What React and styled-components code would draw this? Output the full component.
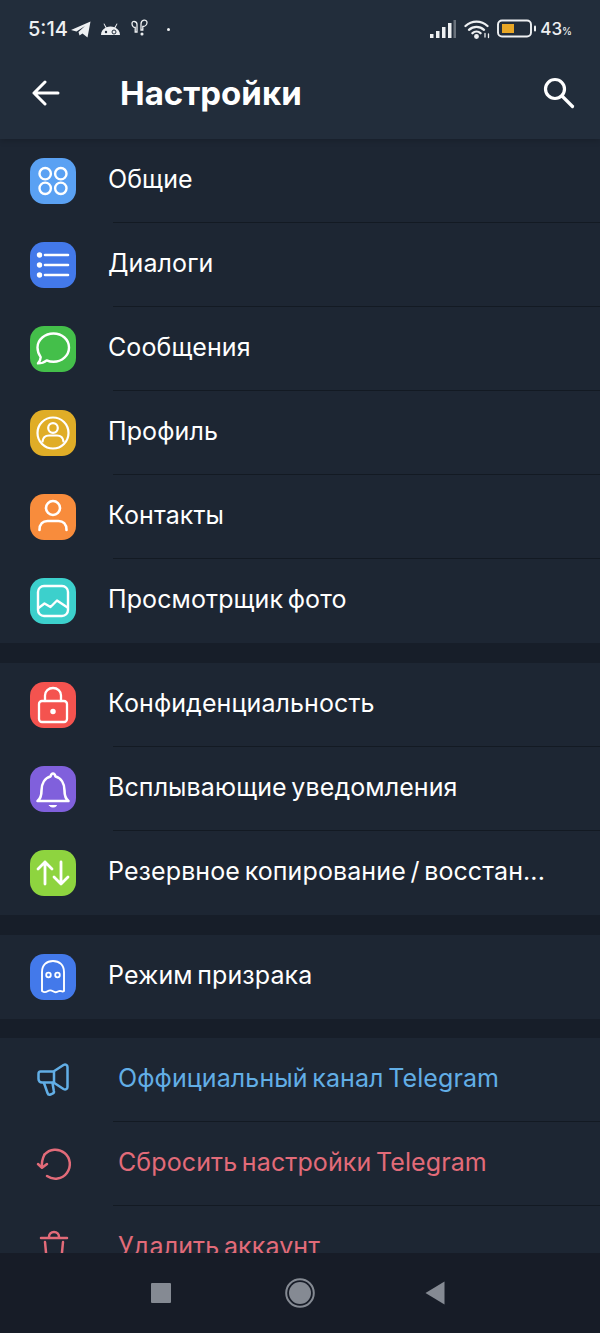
import React from "react";
import styled, { createGlobalStyle } from "styled-components";

const Global = createGlobalStyle`
  html, body { margin: 0; padding: 0; background: #171e29; }
  * { box-sizing: border-box; }
`;

const Screen = styled.div`
  width: 600px;
  height: 1333px;
  display: flex;
  flex-direction: column;
  overflow: hidden;
  background: #171e29;
  font-family: Inter, Roboto, "Liberation Sans", sans-serif;
  color: #fff;
`;

const Top = styled.header`
  height: 139px;
  flex: none;
  position: relative;
  z-index: 1;
  background: #222d3b;
  box-shadow: 0 2px 6px rgba(0, 0, 0, 0.16);
  display: flex;
  flex-direction: column;
`;

const StatusBar = styled.div`
  height: 58px;
  padding: 0 28px;
  display: flex;
  align-items: center;
  justify-content: space-between;
`;

const StatusGroup = styled.div`
  display: flex;
  align-items: center;
  gap: ${p => p.$gap || 0}px;
`;

const Clock = styled.span`
  font-size: 20px;
  font-weight: 500;
  color: #eef0f2;
  margin-right: -6px;
`;

const StatusDot = styled.span`
  width: 3px;
  height: 3px;
  border-radius: 50%;
  background: #eef0f2;
  margin-left: 8px;
`;

const SignalSlot = styled.span`
  display: flex;
  margin-right: 2px;
`;

const Percent = styled.span`
  margin-left: -3px;
  font-size: 17px;
  font-weight: 500;
  color: #eef0f2;
  small { font-size: 10px; }
`;

const NavBar = styled.div`
  height: 70px;
  padding: 0 25px 0 32px;
  display: flex;
  align-items: center;
`;

const Title = styled.h1`
  margin: 0 0 0 60px;
  flex: 1;
  font-size: 33px;
  font-weight: 700;
  line-height: 1;
  color: #fff;
`;

const List = styled.main`
  flex: 1;
  min-height: 0;
  overflow: hidden;
  display: flex;
  flex-direction: column;
  gap: 20px;
`;

const Section = styled.section`
  flex: none;
  background: #1d2633;
  padding-bottom: 1px;
  margin-bottom: ${p => p.$pull ? -1 : 0}px;
`;

const Row = styled.div`
  height: 83px;
  display: flex;
  align-items: center;
  padding-left: ${p => p.$plain ? 36 : 30}px;
`;

const Tile = styled.div`
  width: 46px;
  height: 46px;
  flex: none;
  margin-top: 1px;
  border-radius: 14px;
  background: ${p => p.$bg};
  display: flex;
  align-items: center;
  justify-content: center;
`;

const PlainIcon = styled.div`
  width: 36px;
  height: 36px;
  flex: none;
  display: flex;
  align-items: center;
  justify-content: center;
`;

const Label = styled.span`
  margin-left: ${p => p.$plain ? 46 : 32}px;
  font-size: 25px;
  line-height: 30px;
  letter-spacing: 0.1px;
  word-spacing: -2.5px;
  margin-top: -3px;
  white-space: nowrap;
  color: ${p => p.$color || "#fff"};
`;

const Divider = styled.div`
  height: 1px;
  margin-left: 113px;
  background: #131a23;
`;

const BottomBar = styled.nav`
  height: 80px;
  flex: none;
  background: #171c27;
  padding-left: 151px;
  display: flex;
  align-items: center;
`;

const NavSquare = styled.span`
  width: 20px;
  height: 20px;
  border-radius: 1px;
  background: #858a93;
`;

const NavSlot = styled.span`
  display: flex;
  margin-left: ${p => p.$ml}px;
`;

const S = { fill: "none", stroke: "#fff", strokeLinecap: "round", strokeLinejoin: "round" };

const GridIcon = () => (
  <svg width="34" height="34" viewBox="0 0 34 34" {...S} strokeWidth="2.4">
    <circle cx="9.200" cy="9.700" r="5.700" /><circle cx="24.800" cy="9.700" r="5.700" />
    <circle cx="9.200" cy="24.300" r="5.700" /><circle cx="24.800" cy="24.300" r="5.700" />
  </svg>
);
const ListIcon = () => (
  <svg width="34" height="34" viewBox="0 0 34 34" {...S} strokeWidth="2.600">
    <path d="M9 7h23M9 17h23M9 27h23" />
    <circle cx="3.500" cy="7" r="1.400" fill="#fff" /><circle cx="3.500" cy="17" r="1.400" fill="#fff" /><circle cx="3.500" cy="27" r="1.400" fill="#fff" />
  </svg>
);
const ChatIcon = () => (
  <svg width="36" height="36" viewBox="0 0 36 36" {...S} strokeWidth="2.400">
    <path d="M18.500 2.500C27 2.500 34 8.500 34 16.500s-7 14.300-15.500 14.300c-2.500 0-4.800-.5-6.800-1.400-2 1.700-5.200 3-8.700 3 1.700-1.900 2.600-4 2.700-6.300C3.800 23.500 2.500 20.300 2.500 16.500 2.500 8.500 10 2.500 18.500 2.500z" />
  </svg>
);
const ProfileIcon = () => (
  <svg width="36" height="36" viewBox="0 0 36 36" {...S} strokeWidth="2.200">
    <circle cx="18" cy="18" r="15.500" />
    <circle cx="18" cy="13" r="4.800" />
    <path d="M7.500 26.500c.5-4 3-6 6.500-6h8c3.500 0 6 2 6.500 6" />
  </svg>
);
const ContactIcon = () => (
  <svg width="34" height="36" viewBox="0 0 34 36" {...S} strokeWidth="2.600">
    <circle cx="17" cy="9" r="7" />
    <path d="M3.500 31c0-6 3.500-9 8-9h11c4.500 0 8 3 8 9" />
  </svg>
);
const PhotoIcon = () => (
  <svg width="34" height="34" viewBox="0 0 34 34" {...S} strokeWidth="2.400">
    <rect x="2" y="2" width="30" height="30" rx="6" />
    <path d="M2.500 24l6-4.500 6 3.500 6.500-6.500 10.500 7" />
  </svg>
);
const LockIcon = () => (
  <svg width="34" height="38" viewBox="0 0 34 38" {...S} strokeWidth="2.300">
    <rect x="3" y="15" width="28" height="21" rx="3" />
    <path d="M9 15V9.500C9 5 12.500 2 17 2s8 3 8 7.500V15" />
    <circle cx="17" cy="25.500" r="1.600" fill="#fff" />
  </svg>
);
const BellIcon = () => (
  <svg width="36" height="38" viewBox="0 0 36 38" {...S} strokeWidth="2.600">
    <path d="M2.500 31c3.500-2.500 4-6 4-10.500 0-7 3.500-12.500 9-14 .5-1.800 1.300-3 2.500-3s2 1.200 2.500 3c5.500 1.500 9 7 9 14 0 4.500.5 8 4 10.500z" />
    <path d="M14.500 35.500h7c0 .8-1.500 1.500-3.500 1.500s-3.500-.7-3.500-1.500z" fill="#fff" strokeWidth="1" />
  </svg>
);
const ArrowsIcon = () => (
  <svg width="34" height="26" viewBox="0 0 34 26" {...S} strokeWidth="2.800">
    <path d="M9 24V2M2 9l7-7 7 7" />
    <path d="M25 2v22M18 17l7 7 7-7" />
  </svg>
);
const GhostIcon = () => (
  <svg width="26" height="36" viewBox="0 0 26 36" {...S} strokeWidth="1.900">
    <path d="M2 32V13C2 6 6.500 2 13 2s11 4 11 11v19c-2 1.500-3.500-1-5.500.3-2 1.300-3.500 1.300-5.500 0s-3.500-1.300-5.500 0S4 33.500 2 32z" />
    <circle cx="8.500" cy="16" r="2.300" strokeWidth="1.800" /><circle cx="17.500" cy="16" r="2.300" strokeWidth="1.800" />
  </svg>
);
const MegaIcon = () => (
  <svg width="36" height="36" viewBox="0 0 36 36" fill="none" stroke="#62aee6" strokeWidth="2.500" strokeLinecap="round" strokeLinejoin="round">
    <path d="M4.500 9.500h13l10-6.500c2-1 4-.2 4 2v20c0 2.200-2 3-4 2l-10-6.500H6c-2 0-3.500-1.500-3.500-3.500V12c0-1.500.8-2.500 2-2.500z" />
    <path d="M8 21l3.500 10c.5 1.500 1.500 2 3 1.500l2-.8c1.300-.6 1.800-1.700 1.300-3L16.500 21" />
    <path d="M18 10v11" />
  </svg>
);
const ResetIcon = () => (
  <svg width="36" height="36" viewBox="0 0 36 36" fill="none" stroke="#e26b79" strokeWidth="2.500" strokeLinecap="round" strokeLinejoin="round">
    <path d="M8.500 8.500A14.500 14.500 0 1 1 11 30" />
    <path d="M2 18l4 3.800L11 18" />
    <path d="M6 21c-.5-4 .5-8.500 2.500-12.500" />
  </svg>
);
const TrashIcon = () => (
  <svg width="36" height="38" viewBox="0 0 36 38" fill="none" stroke="#e26b79" strokeWidth="2.500" strokeLinecap="round" strokeLinejoin="round">
    <path d="M5 9h26" />
    <path d="M13 8c0-3 2-5 5-5s5 2 5 5" />
    <path d="M9 13l2 21h14l2-21" />
  </svg>
);

const BackArrow = () => (
  <svg width="28" height="26" viewBox="0 0 28 26" fill="none" stroke="#fff" strokeWidth="3" strokeLinecap="round" strokeLinejoin="round">
    <path d="M2 13h24M13 2 2 13l11 11" />
  </svg>
);
const SearchIcon = () => (
  <svg width="32" height="32" viewBox="0 0 32 32" fill="none" stroke="#fff" strokeWidth="3.200" strokeLinecap="round">
    <circle cx="12" cy="12" r="9.500" /><path d="M19 19l10.500 10.500" />
  </svg>
);

const PlaneGlyph = () => (
  <svg width="20" height="17" viewBox="0 0 20 17" fill="#eef0f2"><path d="M0 9 19.500 .5 16.500 16.500 11.500 12.500 8.500 14.500 7.500 11 14 5 5.500 10.500z" /></svg>
);
const DroidGlyph = () => (
  <svg width="21" height="14" viewBox="0 0 21 14"><path fill="#eef0f2" d="M1 13c0-3.500 2-6 4.500-7.200L3.500 1.800l.8-.4 2.200 3.900a10 10 0 0 1 8 0L16.700 1.400l.8.4-2 4C18 7 20 9.500 20 13z" /><circle cx="6" cy="10" r="1.200" fill="#222d3b" /><circle cx="14" cy="10" r="2" fill="none" stroke="#222d3b" strokeWidth="1" /></svg>
);
const BudsGlyph = () => (
  <svg width="20" height="20" viewBox="0 0 20 20" fill="none" stroke="#eef0f2" strokeWidth="1.300" strokeLinecap="round"><path d="M2 4.500C2 3 3.200 2.200 4.500 2.500 6 2.800 7 4 7 5.500V13H5.200V8.500C3 8.500 2 6.500 2 4.500z" /><path d="M17 3.500C17 2.200 15.800 1 14 1.200 12.200 1.500 11 3 11 5v6h1.800V7.500C15 7.500 17 5.800 17 3.500z" /><circle cx="12" cy="15" r=".9" fill="#eef0f2" /></svg>
);
const SignalGlyph = () => (
  <svg width="26" height="20" viewBox="0 0 26 20" fill="#eef0f2"><rect x="0" y="15" width="3.500" height="4" /><rect x="6" y="12" width="3.500" height="7" /><rect x="12" y="8" width="3.500" height="11" /><rect x="18" y="4" width="3.500" height="15" /><rect x="23.500" y="1" width="2.500" height="18" fill="#6a727c" /></svg>
);
const WifiGlyph = () => (
  <svg width="27" height="20" viewBox="0 0 27 20" fill="none" stroke="#eef0f2" strokeWidth="2.300" strokeLinecap="round"><path d="M1.500 7a16 16 0 0 1 22 0M5 10.800a11 11 0 0 1 15 0M8.500 14.200a6 6 0 0 1 8 0" /><circle cx="12.500" cy="17.500" r="1.300" fill="#eef0f2" /><path d="M21 18v-3.500M24.500 15v3.500" strokeWidth="1.300" /></svg>
);
const BatteryGlyph = () => (
  <svg width="40" height="20" viewBox="0 0 40 20"><rect x="1" y="1.500" width="33" height="16" rx="4" fill="none" stroke="#eef0f2" strokeWidth="1.900" /><rect x="5" y="5" width="12" height="9" fill="#e9a726" /><rect x="37" y="6.500" width="2" height="6" rx="1" fill="#eef0f2" /></svg>
);

const NavCircle = () => (
  <svg width="30" height="30" viewBox="0 0 30 30"><circle cx="15" cy="15" r="13.800" fill="none" stroke="#858a93" strokeWidth="2" /><circle cx="15" cy="15" r="11" fill="#858a93" /></svg>
);
const NavTriangle = () => (
  <svg width="20" height="24" viewBox="0 0 20 24"><path d="M19.500 .5v23L.5 12z" fill="#858a93" /></svg>
);

const groups = [
  [
    [GridIcon, "#5aa1f3", "Общие"],
    [ListIcon, "#4379ea", "Диалоги"],
    [ChatIcon, "#44bf4a", "Сообщения"],
    [ProfileIcon, "#e0ad27", "Профиль"],
    [ContactIcon, "#f88c3c", "Контакты"],
    [PhotoIcon, "#3cd0cc", "Просмотрщик фото"],
  ],
  [
    [LockIcon, "#f4534f", "Конфиденциальность"],
    [BellIcon, "#8060dc", "Всплывающие уведомления"],
    [ArrowsIcon, "#8ed43f", "Резервное копирование / восстан..."],
  ],
  [[GhostIcon, "#4379ea", "Режим призрака"]],
];

const links = [
  [MegaIcon, "#62aee6", "Оффициальный канал Telegram"],
  [ResetIcon, "#e26b79", "Сбросить настройки Telegram"],
  [TrashIcon, "#e26b79", "Удалить аккаунт"],
];

export default function App() {
  return (
    <Screen>
      <Global />
      <Top>
        <StatusBar>
          <StatusGroup $gap={9}>
            <Clock>5:14</Clock>
            <PlaneGlyph />
            <DroidGlyph />
            <BudsGlyph />
            <StatusDot />
          </StatusGroup>
          <StatusGroup $gap={6}>
            <SignalSlot><SignalGlyph /></SignalSlot>
            <WifiGlyph />
            <BatteryGlyph />
            <Percent>43<small>%</small></Percent>
          </StatusGroup>
        </StatusBar>
        <NavBar>
          <BackArrow />
          <Title>Настройки</Title>
          <SearchIcon />
        </NavBar>
      </Top>
      <List>
        {groups.map((g, i) => (
          <Section key={i} $pull={i === 2}>
            {g.map(([Icon, bg, text], j) => (
              <React.Fragment key={text}>
                {j > 0 && <Divider />}
                <Row>
                  <Tile $bg={bg}><Icon /></Tile>
                  <Label>{text}</Label>
                </Row>
              </React.Fragment>
            ))}
          </Section>
        ))}
        <Section>
          {links.map(([Icon, color, text], j) => (
            <React.Fragment key={text}>
              {j > 0 && <Divider />}
              <Row $plain>
                <PlainIcon><Icon /></PlainIcon>
                <Label $plain $color={color}>{text}</Label>
              </Row>
            </React.Fragment>
          ))}
        </Section>
      </List>
      <BottomBar>
        <NavSquare />
        <NavSlot $ml={114}><NavCircle /></NavSlot>
        <NavSlot $ml={110}><NavTriangle /></NavSlot>
      </BottomBar>
    </Screen>
  );
}
